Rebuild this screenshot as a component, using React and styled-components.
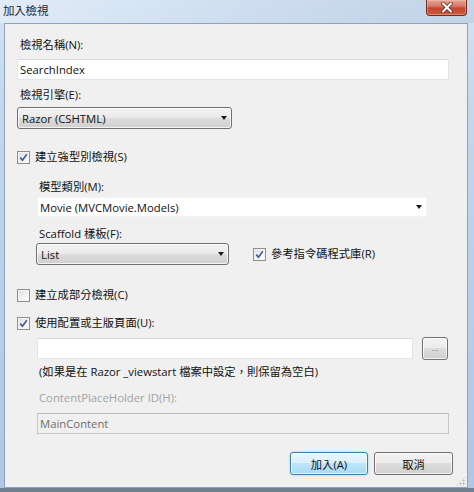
import React from "react";
import styled, { createGlobalStyle, css } from "styled-components";

const Global = createGlobalStyle`
  html, body { margin: 0; padding: 0; background: #b9cfe8; }
  body { width: 474px; height: 492px; overflow: hidden; }
  * { box-sizing: border-box; }
`;

const FONT = `"Open Sans", "Noto Sans CJK TC", sans-serif`;

const Window = styled.div`
  width: 474px;
  height: 492px;
  display: flex;
  flex-direction: column;
  background: linear-gradient(180deg, #d6e4f4 0%, #c4d8ee 20%, #b8cfe9 60%, #afc7e4 100%);
  font-family: ${FONT};
  font-size: 11.3px;
  color: #111;
`;

const TitleBar = styled.div`
  height: 23px;
  display: flex;
  align-items: flex-start;
  padding-left: 3px;
  background: linear-gradient(90deg, rgba(255,255,255,0.3) 0%, rgba(200,215,235,0.2) 40%, rgba(170,190,215,0.3) 75%, rgba(160,180,205,0.3) 100%);
`;

const Title = styled.div`
  margin-top: 3px;
  font-size: 11.5px;
  line-height: 16px;
  color: #1e2630;
  letter-spacing: -0.2px;
`;

const CloseButton = styled.div`
  margin-left: auto;
  margin-right: 7px;
  width: 41px;
  height: 16px;
  border: 1px solid #6e2b22;
  border-top: none;
  border-radius: 0 0 4px 4px;
  background: linear-gradient(180deg, #e6a497 0%, #d77a68 40%, #c4462f 55%, #c85a40 100%);
  box-shadow: inset 0 0 0 1px rgba(255, 200, 190, 0.45);
  display: flex;
  align-items: center;
  justify-content: center;
`;

const FrameBody = styled.div`
  flex: 1;
  display: flex;
  padding: 0 6px 0 4px;
  border-bottom: 4px solid #6f7f90;
`;

const Client = styled.div`
  flex: 1;
  background: #f0f0f0;
  border: 1px solid #8da2bc;
  display: flex;
  flex-direction: column;
  padding: 13px 18px 0 12px;
  position: relative;
`;

const Label = styled.div`
  line-height: 16px;
  height: 16px;
  margin-top: ${(p) => p.$mt || 0}px;
  padding-left: ${(p) => (p.$indent ? 22 : 3)}px;
  color: ${(p) => (p.$disabled ? "#a3a3a3" : "#111")};
  white-space: nowrap;
`;

const TextBox = styled.div`
  height: ${(p) => p.$h || 21}px;
  width: ${(p) => p.$w}px;
  margin-top: ${(p) => p.$mt || 0}px;
  margin-left: ${(p) => (p.$indent ? 20 : 0)}px;
  background: ${(p) => (p.$disabled ? "#f0f0f0" : "#ffffff")};
  border: 1px solid ${(p) => (p.$bare ? "#f4f4f4" : p.$disabled ? "#c6c6c6" : "#e3e5ea")};
  border-top-color: ${(p) => (p.$bare ? "#f4f4f4" : p.$disabled ? "#b9b9b9" : "#d6d8dd")};
  display: flex;
  align-items: center;
  padding: 0 2px;
  color: ${(p) => (p.$disabled ? "#6d6d6d" : "#111")};
  flex-shrink: 0;
`;

const Arrow = styled.span`
  width: 0;
  height: 0;
  border-left: 3.5px solid transparent;
  border-right: 3.5px solid transparent;
  border-top: 4px solid #1a1a1a;
  margin-left: auto;
  margin-right: ${(p) => p.$mr || 4}px;
`;

const buttonFace = css`
  border: 1px solid #707070;
  border-radius: 3px;
  background: linear-gradient(180deg, #f2f2f2 0%, #ebebeb 49%, #dddddd 50%, #cfcfcf 100%);
  box-shadow: inset 0 0 0 1px rgba(255, 255, 255, 0.75);
`;

const DropDown = styled.div`
  ${buttonFace}
  height: 22px;
  width: ${(p) => p.$w}px;
  margin-top: ${(p) => p.$mt || 0}px;
  display: flex;
  align-items: center;
  padding-left: 4px;
  flex-shrink: 0;
`;

const Row = styled.div`
  display: flex;
  align-items: center;
  height: ${(p) => p.$h || 16}px;
  margin-top: ${(p) => p.$mt || 0}px;
  padding-left: ${(p) => p.$indent || 0}px;
`;

const CheckBox = styled.span`
  width: 13px;
  height: 13px;
  border: 1px solid #8f8f8f;
  background: linear-gradient(135deg, #dcdcdc 0%, #f4f4f4 60%, #ffffff 100%);
  box-shadow: inset 0 0 0 1px #f4f4f4;
  display: inline-flex;
  align-items: center;
  justify-content: center;
  flex-shrink: 0;
  margin-left: ${(p) => p.$ml || 0}px;
  margin-right: 5px;
`;

const CheckText = styled.span`
  line-height: 16px;
  white-space: nowrap;
`;

const SmallButton = styled.div`
  ${buttonFace}
  width: 26px;
  height: 23px;
  margin-left: 9px;
  display: flex;
  align-items: center;
  justify-content: center;
  font-size: 8px;
  color: #777;
  padding-bottom: 3px;
`;

const ButtonBar = styled.div`
  display: flex;
  justify-content: flex-end;
  gap: 6px;
  margin-top: 18px;
  margin-right: -4px;
`;

const PushButton = styled.div`
  ${buttonFace}
  width: ${(p) => p.$w}px;
  height: 23px;
  display: flex;
  align-items: center;
  justify-content: center;
  ${(p) =>
    p.$default &&
    css`
      border-color: #3c7fb1;
      background: linear-gradient(180deg, #eaf6fd 0%, #d9f0fc 49%, #bee6fd 50%, #a7d9f5 100%);
      box-shadow: inset 0 0 0 1px rgba(255, 255, 255, 0.7), 0 0 2px rgba(90, 170, 230, 0.6);
    `}
`;

const Grip = styled.div`
  position: absolute;
  right: 1px;
  bottom: 1px;
  width: 10px;
  height: 10px;
  background-image: radial-gradient(circle, #b8b8b8 0.8px, transparent 1.2px);
  background-size: 3px 3px;
  clip-path: polygon(100% 0, 100% 100%, 0 100%);
`;

const Check = () => (
  <svg width="9" height="9" viewBox="0 0 9 9">
    <path d="M1.2 4.6 L3.5 7.2 L7.8 1.2" fill="none" stroke="#3d5a98" strokeWidth="1.6" />
  </svg>
);

const CloseX = () => (
  <svg width="14" height="11" viewBox="0 0 14 11">
    <path d="M3 1.5 L11 9.5 M11 1.5 L3 9.5" stroke="#5a1c14" strokeWidth="3.6" strokeLinecap="round" />
    <path d="M3 1.5 L11 9.5 M11 1.5 L3 9.5" stroke="#ffffff" strokeWidth="2.2" strokeLinecap="round" />
  </svg>
);

const CheckItem = ({ checked, children, ...rest }) => (
  <>
    <CheckBox {...rest}>{checked && <Check />}</CheckBox>
    <CheckText>{children}</CheckText>
  </>
);

export default function App() {
  return (
    <>
      <Global />
      <Window>
        <TitleBar>
          <Title>加入檢視</Title>
          <CloseButton>
            <CloseX />
          </CloseButton>
        </TitleBar>
        <FrameBody>
          <Client>
            <Label>檢視名稱(N):</Label>
            <TextBox $w={432} $mt={6}>SearchIndex</TextBox>
            <Label $mt={7}>檢視引擎(E):</Label>
            <DropDown $w={215} $mt={4}>
              Razor (CSHTML)
              <Arrow />
            </DropDown>

            <Row $mt={20}>
              <CheckItem checked>建立強型別檢視(S)</CheckItem>
            </Row>

            <Label $indent $mt={14}>模型類別(M):</Label>
            <TextBox $indent $bare $w={390} $h={20} $mt={2}>
              Movie (MVCMovie.Models)
              <Arrow $mr={2} />
            </TextBox>

            <Label $indent $mt={9}>Scaffold 樣板(F):</Label>
            <Row $h={22} $mt={1} $indent={19}>
              <DropDown $w={193}>
                List
                <Arrow />
              </DropDown>
              <CheckItem checked $ml={24}>參考指令碼程式庫(R)</CheckItem>
            </Row>

            <Row $mt={22}>
              <CheckItem>建立成部分檢視(C)</CheckItem>
            </Row>
            <Row $mt={12}>
              <CheckItem checked>使用配置或主版頁面(U):</CheckItem>
            </Row>

            <Row $h={23} $mt={6} $indent={20}>
              <TextBox $w={376} />
              <SmallButton>...</SmallButton>
            </Row>
            <Label $indent $mt={4}>(如果是在 Razor _viewstart 檔案中設定，則保留為空白)</Label>
            <Label $indent $disabled $mt={10}>ContentPlaceHolder ID(H):</Label>
            <TextBox $indent $disabled $w={412} $mt={7}>MainContent</TextBox>

            <ButtonBar>
              <PushButton $default $w={78}>加入(A)</PushButton>
              <PushButton $w={79}>取消</PushButton>
            </ButtonBar>
            <Grip />
          </Client>
        </FrameBody>
      </Window>
    </>
  );
}
